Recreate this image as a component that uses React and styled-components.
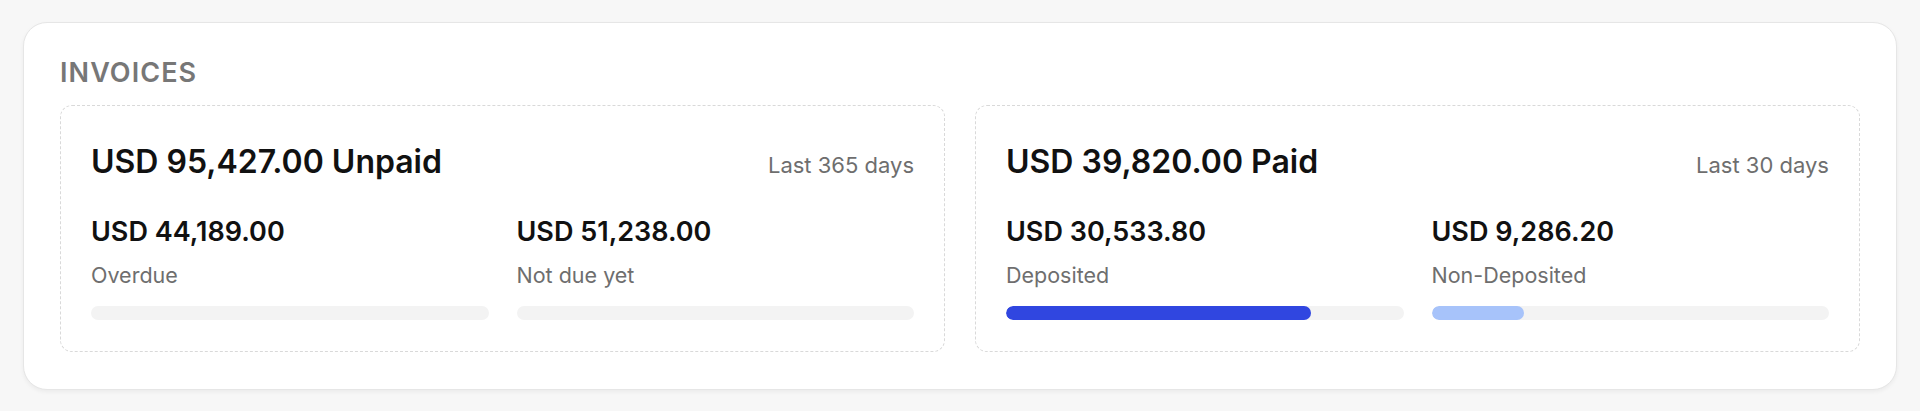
import styled, { createGlobalStyle } from "styled-components";

const GlobalStyle = createGlobalStyle`
  body {
    margin: 0;
    background: #f7f7f7;
    font-family: Inter, "Noto Sans", "Liberation Sans", sans-serif;
    color: #111111;
  }
`;

const summaries = [
  {
    title: "USD 95,427.00 Unpaid",
    period: "Last 365 days",
    items: [
      { amount: "USD 44,189.00", label: "Overdue", value: 0, color: "#3046e0" },
      { amount: "USD 51,238.00", label: "Not due yet", value: 0, color: "#3046e0" },
    ],
  },
  {
    title: "USD 39,820.00 Paid",
    period: "Last 30 days",
    items: [
      { amount: "USD 30,533.80", label: "Deposited", value: 30533.8 / 39820, color: "#3046e0" },
      { amount: "USD 9,286.20", label: "Non-Deposited", value: 9286.2 / 39820, color: "#a7c3fa" },
    ],
  },
];

export default function App() {
  return (
    <>
      <GlobalStyle />
      <Page>
        <Panel>
          <Heading>INVOICES</Heading>
          <CardGrid>
            {summaries.map((s) => (
              <SummaryCard key={s.title}>
                <CardHeader>
                  <Title>{s.title}</Title>
                  <Period>{s.period}</Period>
                </CardHeader>
                <Columns>
                  {s.items.map((item) => (
                    <Column key={item.label}>
                      <Amount>{item.amount}</Amount>
                      <Label>{item.label}</Label>
                      <Track>
                        <Fill
                          $color={item.color}
                          style={{ width: `${item.value * 100}%` }}
                        />
                      </Track>
                    </Column>
                  ))}
                </Columns>
              </SummaryCard>
            ))}
          </CardGrid>
        </Panel>
      </Page>
    </>
  );
}

const Page = styled.main`
  padding: 22px 23px;
`;

const Panel = styled.section`
  background: #ffffff;
  border: 1px solid #e6e6e6;
  border-radius: 24px;
  box-shadow: 0 2px 4px rgba(0, 0, 0, 0.05);
  padding: 34px 36px 37px;
`;

const Heading = styled.h2`
  margin: 0 0 15px;
  font-size: 27px;
  font-weight: 600;
  letter-spacing: 0.04em;
  line-height: 1.21;
  color: #777777;
`;

const CardGrid = styled.div`
  display: grid;
  grid-template-columns: 1fr 1fr;
  gap: 30px;
`;

const SummaryCard = styled.article`
  border: 1px dashed #d9d9d9;
  border-radius: 12px;
  padding: 37px 30px 31px;
`;

const CardHeader = styled.div`
  display: flex;
  justify-content: space-between;
  align-items: baseline;
`;

const Title = styled.h3`
  margin: 0;
  font-size: 32px;
  font-weight: 600;
  line-height: 1.2;
  color: #111111;
`;

const Period = styled.span`
  font-size: 22px;
  color: #6e6e6e;
`;

const Columns = styled.div`
  display: grid;
  grid-template-columns: 1fr 1fr;
  gap: 28px;
  margin-top: 35px;
`;

const Column = styled.div`
  display: flex;
  flex-direction: column;
`;

const Amount = styled.div`
  font-size: 27px;
  font-weight: 600;
  line-height: 1.21;
  color: #111111;
`;

const Label = styled.div`
  margin-top: 13px;
  font-size: 21.5px;
  line-height: 1.21;
  color: #6e6e6e;
`;

const Track = styled.div`
  margin-top: 18px;
  height: 14px;
  border-radius: 7px;
  background: #f3f3f3;
  overflow: hidden;
`;

const Fill = styled.div`
  height: 100%;
  border-radius: 7px;
  background: ${({ $color }) => $color};
`;
